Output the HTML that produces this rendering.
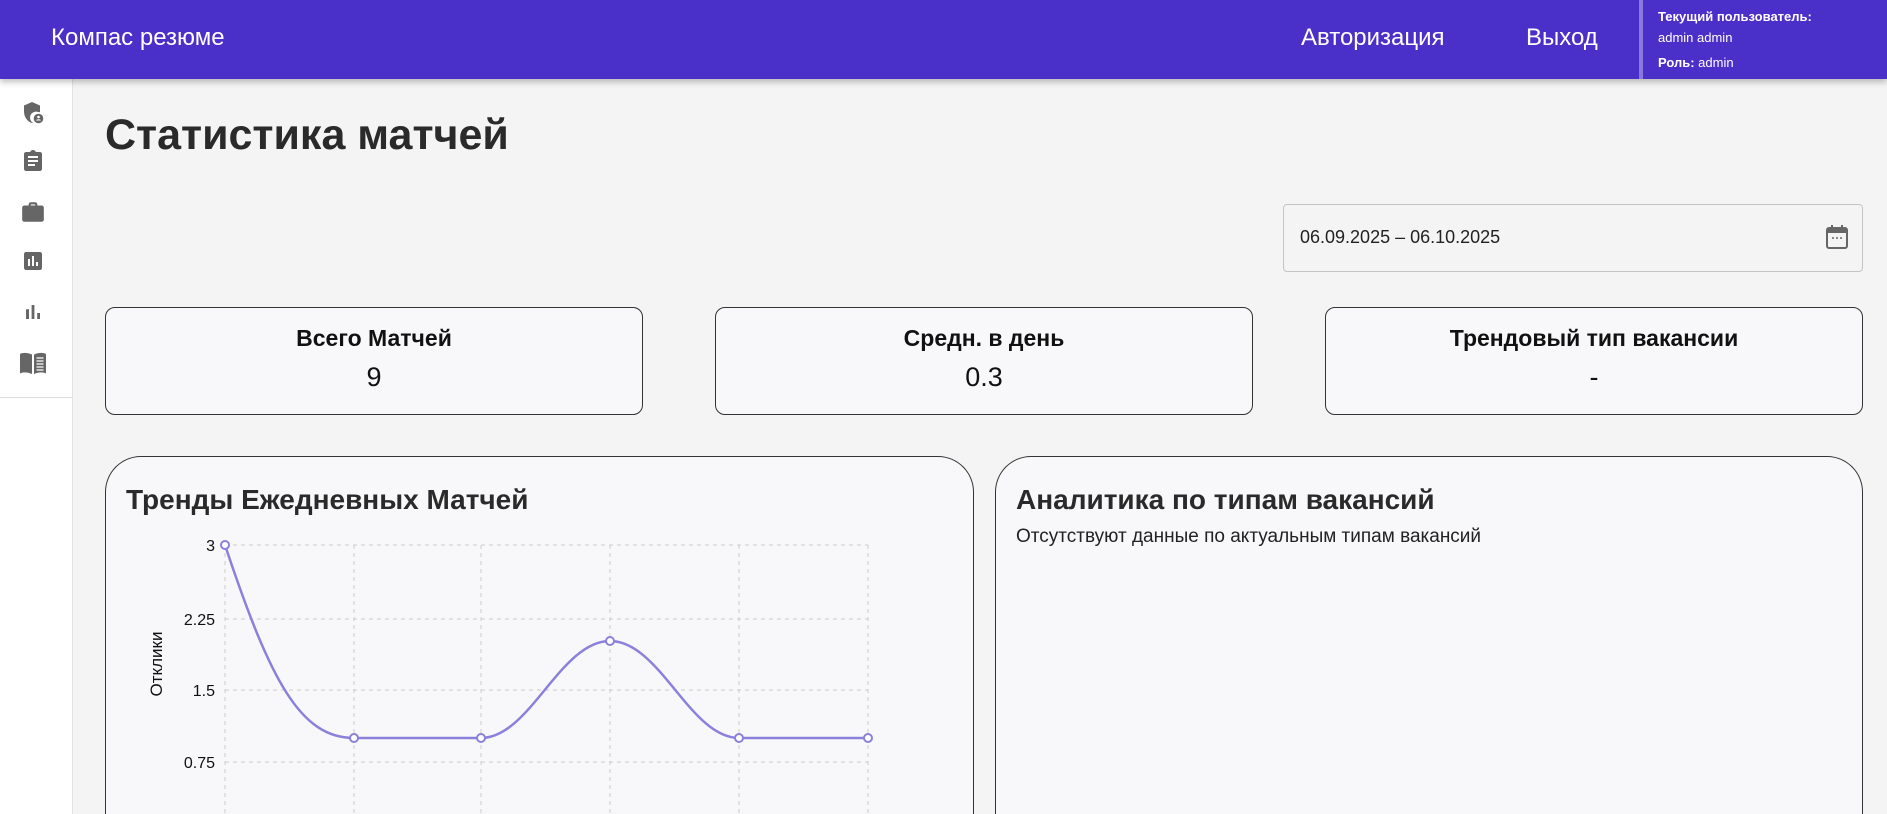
<!DOCTYPE html>
<html><head><meta charset="utf-8"><style>
*{margin:0;padding:0;box-sizing:border-box}
html,body{width:1887px;height:814px;overflow:hidden}
body{background:#f4f4f4;font-family:"Liberation Sans","Noto Sans CJK SC",sans-serif;color:#222}
#wrap{position:relative;width:1887px;height:814px;overflow:hidden}
.hdr{position:absolute;left:0;top:0;width:1887px;height:79px;background:#4a2fc8;box-shadow:0 3px 6px rgba(0,0,0,.25);z-index:2;color:#fff}
.abs{position:absolute;white-space:nowrap}
.side{position:absolute;left:0;top:79px;width:73px;height:735px;background:#fff;border-right:1px solid #e2e2e2}
.side .sep{position:absolute;left:0;top:318px;width:73px;height:1px;background:#ddd}
.card{position:absolute;top:307px;width:538px;height:108px;background:#f8f8fa;border:1px solid #333;border-radius:10px;text-align:center}
.card .t{margin-top:17px;font-size:23px;font-weight:bold;color:#111}
.card .v{margin-top:10px;font-size:27px;color:#111}
.panel{position:absolute;top:456px;height:358px;background:#f8f8fa;border:1px solid #333;border-bottom:none;border-radius:36px 36px 0 0}
.panel h2{position:absolute;left:20px;top:27px;font-size:28px;font-weight:bold;color:#2a2a2a;white-space:nowrap}
</style></head><body><div id="wrap">
<div class="hdr">
 <div class="abs" style="left:51px;top:24px;font-size:24px;">Компас резюме</div>
 <div class="abs" style="left:1301px;top:24px;font-size:24px;">Авторизация</div>
 <div class="abs" style="left:1526px;top:24px;font-size:24px;">Выход</div>
 <div class="abs" style="left:1639px;top:0;width:4px;height:79px;background:#8a78de"></div>
 <div class="abs" style="left:1658px;top:9px;font-size:13px;font-weight:bold">Текущий пользователь:</div>
 <div class="abs" style="left:1658px;top:30px;font-size:13px;">admin admin</div>
 <div class="abs" style="left:1658px;top:55px;font-size:13px;"><b>Роль:</b> admin</div>
</div>
<div class="side">
 <svg class="abs" style="left:21px;top:22px" width="24" height="24" viewBox="0 0 24 24" fill="#666"><path d="M11 1L3 4.5v6C3 16 6.5 20.8 11 22c.3 0 .6-.1.9-.2A6 6 0 0 1 17 11a6 6 0 0 1 2 .3V4.5z"/><circle cx="17.5" cy="17.5" r="4.8"/><circle cx="17.5" cy="16" r="1.3" fill="#fff"/><path d="M15 19.5c.5-1 1.5-1.3 2.5-1.3s2 .3 2.5 1.3z" fill="#fff"/></svg>
 <svg class="abs" style="left:21px;top:70px" width="24" height="24" viewBox="0 0 24 24" fill="#666"><path d="M19 3h-4.2C14.4 1.8 13.3 1 12 1s-2.4.8-2.8 2H5c-1.1 0-2 .9-2 2v15c0 1.1.9 2 2 2h14c1.1 0 2-.9 2-2V5c0-1.1-.9-2-2-2zM7 7h10v2H7zm0 4h10v2H7zm0 4h7v2H7z"/></svg>
 <svg class="abs" style="left:20px;top:120px" width="26" height="26" viewBox="0 0 24 24" fill="#666"><path d="M10 3h4c1.1 0 2 .9 2 2v1h4c1.1 0 2 .9 2 2v11c0 1.1-.9 2-2 2H4c-1.1 0-2-.9-2-2V8c0-1.1.9-2 2-2h4V5c0-1.1.9-2 2-2zm0 3h4V5h-4z"/></svg>
 <svg class="abs" style="left:21px;top:170px" width="24" height="24" viewBox="0 0 24 24" fill="#666"><path d="M19 3H5c-1.1 0-2 .9-2 2v14c0 1.1.9 2 2 2h14c1.1 0 2-.9 2-2V5c0-1.1-.9-2-2-2zM9 17H7v-7h2zm4 0h-2V7h2zm4 0h-2v-4h2z"/></svg>
 <svg class="abs" style="left:21px;top:221px" width="24" height="24" viewBox="0 0 24 24" fill="#666"><path d="M5 9.2h3V19H5zM10.6 5h2.8v14h-2.8zm5.6 8H19v6h-2.8z"/></svg>
 <svg class="abs" style="left:19px;top:271px" width="28" height="26" viewBox="0 0 28 26" fill="#666"><path d="M1 4c3-1.5 7-1.5 12 .5V24c-5-2-9-2-12-.5z"/><path d="M15 4.5c5-2 9-2 12-.5v19.5c-3-1.5-7-1.5-12 .5z"/><path d="M17.5 8h7M17.5 11h7M17.5 14h7M17.5 17h7M17.5 20h7" stroke="#fff" stroke-width="1.2"/></svg>
 <div class="sep"></div>
</div>
<div class="abs" style="left:105px;top:111px;font-size:43px;font-weight:bold;color:#2a2a2a">Статистика матчей</div>
<div class="abs" style="left:1283px;top:204px;width:580px;height:68px;border:1px solid #c4c4c4;border-radius:4px;background:#f4f4f4"></div>
<div class="abs" style="left:1300px;top:227px;font-size:18px;color:#222">06.09.2025 – 06.10.2025</div>
<svg class="abs" style="left:1825px;top:224px" width="24" height="26" viewBox="0 0 24 26" fill="none"><rect x="2" y="4" width="20" height="20" rx="2" stroke="#666" stroke-width="2"/><rect x="2" y="4" width="20" height="5" fill="#666"/><rect x="6" y="1" width="2" height="4" fill="#666"/><rect x="16" y="1" width="2" height="4" fill="#666"/><circle cx="8" cy="14" r="1" fill="#666"/><circle cx="12" cy="14" r="1" fill="#666"/><circle cx="16" cy="14" r="1" fill="#666"/></svg>
<div class="card" style="left:105px"><div class="t">Всего Матчей</div><div class="v">9</div></div>
<div class="card" style="left:715px"><div class="t">Средн. в день</div><div class="v">0.3</div></div>
<div class="card" style="left:1325px"><div class="t">Трендовый тип вакансии</div><div class="v">-</div></div>
<div class="panel" style="left:105px;width:869px"><h2>Тренды Ежедневных Матчей</h2></div>
<div class="panel" style="left:995px;width:868px"><h2>Аналитика по типам вакансий</h2>
 <div class="abs" style="left:20px;top:69px;font-size:19px;color:#222">Отсутствуют данные по актуальным типам вакансий</div></div>
<svg class="abs" style="left:0;top:0" width="1887" height="814">
 <g stroke="#ccc" stroke-dasharray="4 4" stroke-width="1">
  <path d="M225 545H868M225 619H868M225 690H868M225 762H868"/>
  <path d="M225 545V814M354 545V814M481 545V814M610 545V814M739 545V814M868 545V814"/>
 </g>
 <g font-family="Liberation Sans, sans-serif" font-size="16" fill="#111" text-anchor="end">
  <text x="215" y="551">3</text><text x="215" y="625">2.25</text><text x="215" y="696">1.5</text><text x="215" y="768">0.75</text>
 </g>
 <text transform="translate(162,664) rotate(-90)" text-anchor="middle" font-family="Liberation Sans, sans-serif" font-size="17" fill="#111">Отклики</text>
 <path d="M225 545C270 680 300 738 354 738L481 738C530 738 560 641 610 641C660 641 690 738 739 738L868 738" stroke="#8b80dc" stroke-width="2.5" fill="none"/>
 <g fill="#fff" stroke="#8b80dc" stroke-width="2">
  <circle cx="225" cy="545" r="4"/><circle cx="354" cy="738" r="4"/><circle cx="481" cy="738" r="4"/><circle cx="610" cy="641" r="4"/><circle cx="739" cy="738" r="4"/><circle cx="868" cy="738" r="4"/>
 </g>
</svg>
</div></body></html>
